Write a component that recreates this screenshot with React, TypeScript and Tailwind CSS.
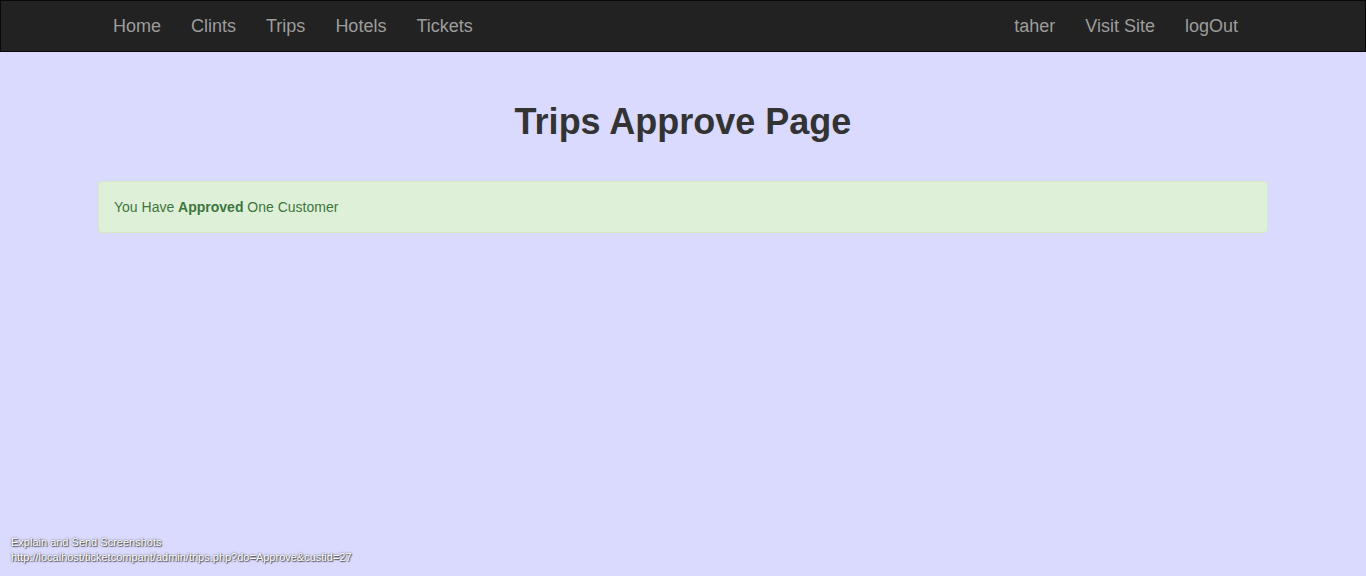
import React from 'react';

const leftLinks = ['Home', 'Clints', 'Trips', 'Hotels', 'Tickets'];
const rightLinks = ['taher', 'Visit Site', 'logOut'];

const App: React.FC = () => {
  return (
    <div className="relative min-h-screen bg-[#dadaff] font-['Liberation_Sans',Arial,sans-serif]">
      {/* navbar */}
      <nav className="h-[52px] bg-[#222222] border border-[#080808]">
        <div className="mx-auto flex h-full w-[1170px] items-center justify-between px-[15px]">
          <ul className="-ml-[15px] flex">
            {leftLinks.map((l) => (
              <li key={l}>
                <a className="block px-[15px] text-[18px] leading-[50px] text-[#9d9d9d]">{l}</a>
              </li>
            ))}
          </ul>
          <ul className="flex">
            {rightLinks.map((l) => (
              <li key={l}>
                <a className="block px-[15px] text-[18px] leading-[50px] text-[#9d9d9d]">{l}</a>
              </li>
            ))}
          </ul>
        </div>
      </nav>

      <div className="mx-auto w-[1170px]">
        <h1 className="mt-[50px] text-center text-[36px] font-bold leading-[40px] text-[#333333]">
          Trips Approve Page
        </h1>
        <div className="mt-[39px] rounded-[4px] border border-[#d6e9c6] bg-[#dff0d8] px-[15px] py-[15px] text-[14px] leading-[20px] text-[#3c763d]">
          You Have <strong>Approved</strong> One Customer
        </div>
      </div>

      {/* status overlay */}
      <div className="absolute bottom-[11px] left-[11px] text-[11px] leading-[15px] text-white [text-shadow:0_0_2px_#444,1px_1px_1px_#555]">
        <div>Explain and Send Screenshots</div>
        <div>http://localhost/ticketcompant/admin/trips.php?do=Approve&amp;custid=27</div>
      </div>
    </div>
  );
};

export default App;
